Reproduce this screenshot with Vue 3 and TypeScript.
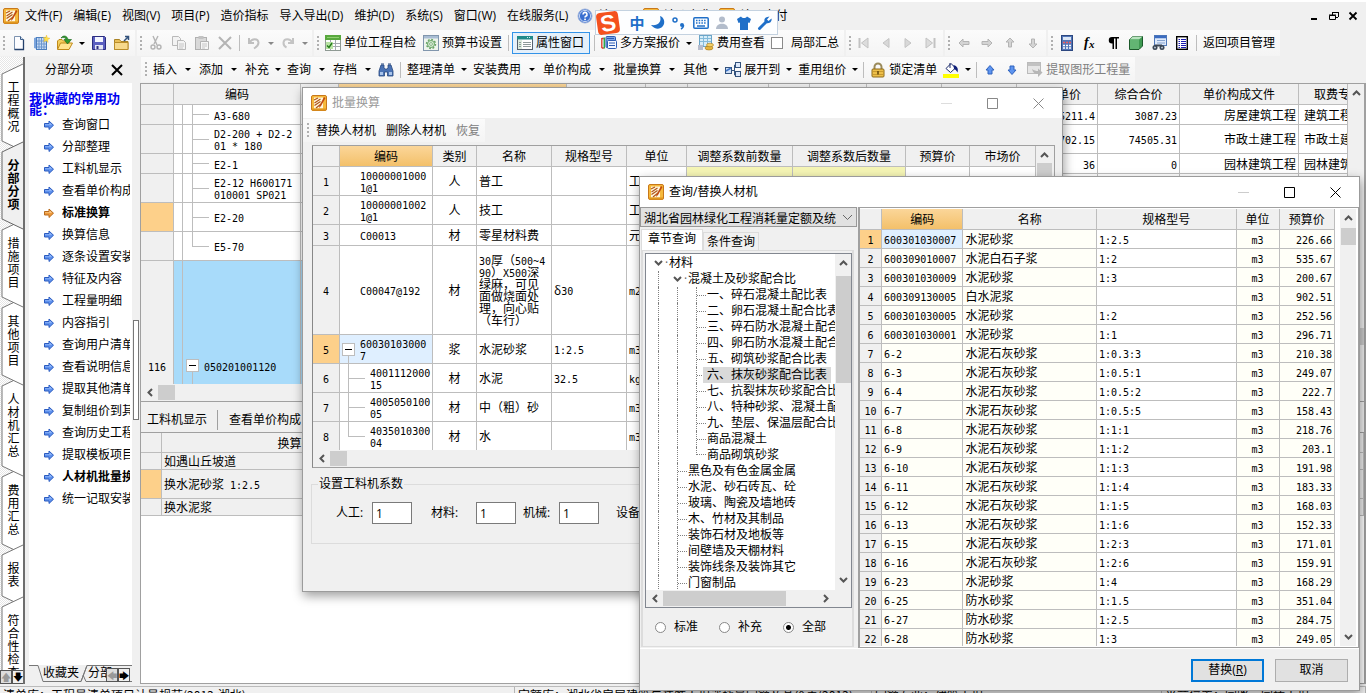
<script setup lang="ts">
import { h, ref } from 'vue'

interface ToolItem {
  k: 'grip' | 'sep' | 'icon' | 'text' | 'arrow' | 'check'
  icon?: string
  label?: string
  off?: boolean
  on?: boolean
  wide?: boolean
  slim?: boolean
}

const icons: Record<string, string> = {
  app: '<rect x="0.5" y="0.5" width="15" height="15" rx="1.5" fill="#f6b93c" stroke="#c8781a"/><rect x="3" y="2.500" width="9" height="11" fill="#fff6dc"/><path d="M3 5l4-2M3.500 8l6-4M3.500 10.500l6-4M5 13l5-4" stroke="#b0561a" stroke-width="1.2" fill="none"/><path d="M13 2L8.500 10.500 8 13l2-2 4.500-8z" fill="#c04a12"/><path d="M1 14.500h14" stroke="#e0961e" stroke-width="2"/>',
  help: '<circle cx="8" cy="8" r="7" fill="#3a6fd0" stroke="#9fb4dc"/><circle cx="8" cy="8" r="5.6" fill="none" stroke="#fff" stroke-width="0.7"/><path d="M6 6.4a2 2 0 1 1 2.8 1.8c-.6.3-.8.6-.8 1.3" fill="none" stroke="#fff" stroke-width="1.6"/><rect x="7.2" y="10.6" width="1.7" height="1.6" fill="#fff"/>',
  page: '<path d="M3.5 1.5h6l3 3v10h-9z" fill="#fdfdff" stroke="#7d93b0"/><path d="M12.500 4.500v10h-9" fill="none" stroke="#24406b" stroke-width="1.300"/><path d="M9.500 1.500v3h3" fill="#cfdcec" stroke="#3d5f8a"/>',
  book: '<path d="M0 3l3-1v12l-3-1z" fill="#7ba4dc"/><rect x="2.500" y="2.500" width="10" height="12" fill="#c9dcf3" stroke="#4d7fbf"/><path d="M5 3v11M7.500 3v11M10 3v11M3 6h9M3 9h9M3 12h9" stroke="#6c97cf"/><path d="M12.500 0l.8 2.700 2.700.6-2.300 1.400.4 2.800-2-1.800-2.400 1 1-2.500L9.200 2.300l2.500.2z" fill="#ffe04a" stroke="#e8b830" stroke-width=".4"/>',
  open: '<path d="M.5 14V6l1.500-1.500h3L6.500 6H12v2" fill="#f3cf5c" stroke="#c08a1a"/><path d="M.5 14.500L3.500 8h12L12 14.500z" fill="#ffe58f" stroke="#c08a1a"/><path d="M4 3c2.500-3.500 6.500-2 7 1.500h3.500L10.500 9 7 4.500h2C8.500 2.500 6.500 2 4 3z" fill="#2f9a2f" stroke="#146014" stroke-width=".6"/>',
  save: '<path d="M1.500 1.500h12l1 1v12h-13z" fill="#5b5fc0" stroke="#2b2d80"/><rect x="4" y="2" width="8" height="5" fill="#f4f6ff"/><rect x="4" y="10" width="8" height="4.500" fill="#e4e6f4"/><rect x="5.500" y="11" width="2" height="3" fill="#2b2d80"/>',
  folder: '<path d="M.5 4.500h5l1.500 2H14v8H.5z" fill="#e9bf58" stroke="#a98326"/><path d="M.5 14.500V7.500H14v7z" fill="#f6d98c" stroke="#b98d2a"/><path d="M10 6l4-4M11 1.500h3.500V5" stroke="#33527c" stroke-width="1.500" fill="none"/>',
  cut: '<path d="M5 1l4 9M10 1L6 9" stroke="#b4b4b4" stroke-width="1.400"/><circle cx="5" cy="12" r="2" fill="none" stroke="#b4b4b4" stroke-width="1.400"/><circle cx="11" cy="12" r="2" fill="none" stroke="#b4b4b4" stroke-width="1.400"/>',
  copy: '<path d="M1.500 1.500h6l2 2v7h-8z" fill="#f3f3f3" stroke="#b9b9b9"/><path d="M6.500 5.500h6l2 2v7h-8z" fill="#f3f3f3" stroke="#b9b9b9"/><path d="M8 9h5M8 11h5M8 13h4" stroke="#c6c6c6"/>',
  paste: '<rect x="1.500" y="2.500" width="11" height="12" fill="#d9d9d9" stroke="#b0b0b0"/><rect x="4.500" y="1" width="5" height="3" fill="#c2c2c2"/><path d="M6.500 6.500h8v8h-8z" fill="#f6f6f6" stroke="#b4b4b4"/><path d="M8 9h5M8 11h5M8 13h3" stroke="#c6c6c6"/>',
  del: '<path d="M2 2l12 12M14 2L2 14" stroke="#b4b4b4" stroke-width="2"/>',
  undo: '<path d="M3 3v5h5M3.500 7.500C6 3 12 3 12.500 7.500c.2 3-2 4.500-4.500 6" fill="none" stroke="#bfbfbf" stroke-width="2"/>',
  redo: '<path d="M13 3v5H8M12.500 7.500C10 3 4 3 3.500 7.500c-.2 3 1 4 3 5" fill="none" stroke="#c4c4c4" stroke-width="2"/>',
  check: '<rect x="0.500" y="0.500" width="15" height="15" fill="#fff" stroke="#8f9a94"/><rect x="0" y="0" width="16" height="5" fill="#58a83e"/><path d="M2 2.500h12" stroke="#8fd070"/><path d="M1 8.500h14M1 11.500h14M5.500 5v10M10.500 5v10" stroke="#a4a9ae"/><rect x="1" y="7" width="7" height="7" fill="#b9e3a4"/><path d="M2 10.500l2 2 3-4.500" stroke="#217a18" stroke-width="1.400" fill="none"/>',
  gear: '<rect x="0.500" y="0.500" width="15" height="15" fill="#eef4ec" stroke="#8196ad"/><rect x="1" y="1" width="14" height="2.500" fill="#a9bdd4"/><circle cx="8" cy="9" r="4.400" fill="none" stroke="#6aa568" stroke-width="1.600" stroke-dasharray="1.800 1.600"/><circle cx="8" cy="9" r="3.500" fill="#d7ecd3" stroke="#6aa568"/><circle cx="8" cy="9" r="1.400" fill="#fff" stroke="#6aa568" stroke-width=".8"/>',
  prop: '<rect x="0.500" y="1.500" width="15" height="13" fill="#fff" stroke="#55606e"/><rect x="0" y="1" width="16" height="3.500" fill="#1f8a8a"/><path d="M10 2.500h4" stroke="#cfeeee" stroke-dasharray="1 1"/><rect x="1" y="5" width="4" height="9" fill="#dcebdd"/><path d="M6 7.500h8M6 9.500h8M6 11.500h8M2 7.500h2M2 9.500h2M2 11.500h2" stroke="#8e9a9a"/>',
  multi: '<path d="M.8 3v10M.8 3.500h2M.8 13h2" stroke="#d93a2b" stroke-width="1.300"/><path d="M3.300 2.500v11" stroke="#2fa84a" stroke-width="1.500"/><rect x="5" y="1.500" width="9.500" height="11" rx="1" fill="#7aa4ea" stroke="#2c5cb3"/><rect x="6.500" y="5.500" width="9" height="8" rx="1" fill="#f3f7ff" stroke="#2c5cb3"/><path d="M6 3.500h7M8 8h6M8 10.500h6" stroke="#2c5cb3"/>',
  fee: '<rect x="1.500" y="0.500" width="12" height="11" fill="#d7edf8" stroke="#6aa5c8"/><path d="M2 3.500h11M2 6.500h11M5.500 1v10M9.500 1v10" stroke="#83bada"/><path d="M0 10h5v5H0z" fill="#b7bccc"/><ellipse cx="11" cy="13" rx="4" ry="2" fill="#e7b53c" stroke="#a37618" stroke-width=".6"/><ellipse cx="12" cy="10" rx="3.500" ry="1.800" fill="#f4cf66" stroke="#a37618" stroke-width=".6"/>',
  first: '<path d="M3.500 3v10" stroke="#c2c2c2" stroke-width="2"/><path d="M12 3v10L5.500 8z" fill="#dcdcdc" stroke="#c2c2c2"/>',
  prev: '<path d="M11 3.500v9L5 8z" fill="#d8d8d8" stroke="#c4c4c4"/>',
  next: '<path d="M5 3.500v9L11 8z" fill="#d8d8d8" stroke="#c4c4c4"/>',
  last: '<path d="M12.500 3v10" stroke="#c2c2c2" stroke-width="2"/><path d="M4 3v10l6.500-5z" fill="#dcdcdc" stroke="#c2c2c2"/>',
  gl: '<path d="M3 8l4-4v2.500h6v3H7V12z" fill="#d4d4d4" stroke="#b4b4b4"/>',
  gr: '<path d="M13 8L9 4v2.500H3v3h6V12z" fill="#d4d4d4" stroke="#b4b4b4"/>',
  gu: '<path d="M8 3l4 4H9.500v5h-3V7H4z" fill="#d4d4d4" stroke="#b4b4b4"/>',
  gd: '<path d="M8 13l4-4H9.500V4h-3v5H4z" fill="#d4d4d4" stroke="#b4b4b4"/>',
  calc: '<rect x="2.500" y="0.500" width="11" height="15" fill="#5276b8" stroke="#2c4780"/><rect x="4" y="2" width="8" height="3" fill="#dbe6f5"/><path d="M4 7.500h2M7 7.500h2M10 7.500h2" stroke="#f06060" stroke-width="1.600"/><path d="M4 10.500h2M7 10.500h2M10 10.500h2M4 13h2M7 13h2M10 13h2" stroke="#fff" stroke-width="1.600"/>',
  fx: '<text x="2" y="12" font-family="Liberation Serif,serif" font-style="italic" font-weight="bold" font-size="14">f</text><text x="7" y="13" font-family="Liberation Serif,serif" font-style="italic" font-weight="bold" font-size="11">x</text>',
  para: '<path d="M7 2a3.200 3.200 0 0 0 0 6.500h.5V14H9V3.500h1.500V14H12V3.500h2V2z" fill="#000"/>',
  cube: '<path d="M1.500 4.500L5 1.500h9.500V11L11 14.500H1.500z" fill="#3f9a52" stroke="#1c5a2b"/><path d="M1.500 4.500L5 1.500h9.500L11 4.500z" fill="#b9e4bf"/><path d="M11 4.500h-9v9.500h9z" fill="#62b573"/>',
  find: '<rect x="3.500" y="0.500" width="12" height="10" fill="#dfeafa" stroke="#4f78b8"/><path d="M4 2h11" stroke="#3b6cc0" stroke-width="2.500"/><path d="M6 5.500h8M6 8h8" stroke="#86a3cf"/><circle cx="4" cy="12.500" r="2.500" fill="#3b4654"/><circle cx="11" cy="12.500" r="2.500" fill="#3b4654"/><circle cx="4" cy="12.500" r="1" fill="#b9c6d6"/><circle cx="11" cy="12.500" r="1" fill="#b9c6d6"/><path d="M4 10.500h7" stroke="#3b4654" stroke-width="2"/>',
  list: '<rect x="2.700" y="1.700" width="10.600" height="12.600" fill="#fff" stroke="#000" stroke-width="1.400"/><path d="M4.500 4.500h1.500M7 4.500h5M4.500 6.500h1.500M7 6.500h5M4.500 8.500h1.500M7 8.500h5M4.500 10.500h1.500M7 10.500h5M4.500 12.500h1.500M7 12.500h5" stroke="#1a1ab0"/>',
  bino: '<path d="M3 3h3v3l1 1h2l1-1V3h3l2 6v5H9.500v-4h-3v4H1V9z" fill="#4a72b4" stroke="#27477e" stroke-width=".8"/><path d="M2 10h3v3H2zM11 10h3v3h-3z" fill="#a9c4ea"/><path d="M3 2h3M10 2h3" stroke="#27477e"/>',
  expand: '<rect x="0.500" y="5.500" width="6" height="6" fill="#cfe0f7" stroke="#33527c"/><path d="M7 8.500h3M9.500 3v10M9.500 3H11M9.500 13H11" stroke="#33527c"/><rect x="10.500" y="0.500" width="5" height="5" fill="#dce8fa" stroke="#33527c"/><rect x="10.500" y="9.500" width="5" height="5" fill="#dce8fa" stroke="#33527c"/><path d="M1 9l5-3" stroke="#3f74c4" stroke-width="1.500"/>',
  lock: '<path d="M4.500 8V5a3.500 3.500 0 0 1 7 0v3" fill="none" stroke="#9a8a5a" stroke-width="2"/><rect x="2" y="7" width="12" height="8" rx="1" fill="#edbf4a" stroke="#8d6a1a"/><path d="M3 9.500h10M3 12.500h10" stroke="#c99a2e"/><rect x="7.200" y="9" width="1.600" height="3.500" fill="#6b4d0c"/>',
  paint: '<path d="M3 6.500l5-5 4.500 4.500-5 4.500z" fill="#fff" stroke="#1a2a6a"/><path d="M7 1v5" stroke="#1a2a6a"/><path d="M10.500 3c4 1 5 4 4 7.500-1-2-2-3-3.500-3.500z" fill="#10207a"/><rect x="0" y="12" width="16" height="4" fill="#ff0"/>',
  up: '<path d="M8 3.500l4 4.500H10v4H6V8H4z" fill="#5d94f0" stroke="#2f62bd"/>',
  down: '<path d="M8 12.500l4-4.500H10V4H6v4H4z" fill="#5d94f0" stroke="#2f62bd"/>',
  extract: '<rect x="0.500" y="0.500" width="13" height="11" fill="#e6e6e6" stroke="#bbb"/><rect x="1" y="1" width="12" height="3" fill="#c2c2c2"/><path d="M5 7c1 4 3 5 6 5v3l4.500-4.500L11 6.500V9C9 9 7 8.500 5 7z" fill="#b6b6b6"/>',
  go: '<path d="M3.500 6.500h4.500V4l4.500 4.200L8 12.500V10H3.500z" fill="#5f92ee" stroke="#2a5bc0"/><path d="M4 7.200h4.500V5.500L11 7.700H4z" fill="#9fc0fa"/>',
  hot: '<path d="M3.500 6.500h4.500V4l4.500 4.200L8 12.500V10H3.500z" fill="#ef9a3c" stroke="#b86a1c"/><path d="M4 7.200h4.500V5.500L11 7.700H4z" fill="#fbd39a"/>',
}

const Ico = (p: { n: string }) =>
  h('svg', { class: 'ico', width: 16, height: 16, viewBox: '0 0 16 16', 'aria-hidden': 'true', innerHTML: icons[p.n] })
Ico.props = ['n']

/* Western characters in the data grids use a half-width face beside the CJK one. */
const Mix = (p: { t: string }) =>
  (p.t.match(/[\x20-\x7e\n]+|[^\x20-\x7e\n]+/g) || []).map((s) =>
    h('span', { class: /^[\x20-\x7e\n]/.test(s) ? 'lat' : 'cjk' }, s),
  )
Mix.props = ['t']

const menus = ['文件(F)', '编辑(E)', '视图(V)', '项目(P)', '造价指标', '导入导出(D)', '维护(D)', '系统(S)', '窗口(W)', '在线服务(L)']

const ic = (icon: string, o: Partial<ToolItem> = {}): ToolItem => ({ k: 'icon', icon, ...o })
const tx = (label: string, icon?: string, o: Partial<ToolItem> = {}): ToolItem => ({ k: 'text', label, icon, ...o })
const grip: ToolItem = { k: 'grip' }
const sep: ToolItem = { k: 'sep' }
const arrow: ToolItem = { k: 'arrow' }
const split: ToolItem = { k: 'arrow', wide: true }
const slim = { slim: true }

const bars1: ToolItem[][] = [
  [grip, ic('page'), ic('book'), ic('open'), arrow, ic('save'), ic('folder')],
  [grip, ic('cut'), ic('copy'), ic('paste'), ic('del'), sep, ic('undo'), { k: 'arrow', off: true }, ic('redo'), { k: 'arrow', off: true }],
  [grip, tx('单位工程自检', 'check'), tx('预算书设置', 'gear'), sep, tx('属性窗口', 'prop', { on: true }), sep, tx('多方案报价', 'multi'), arrow, tx('费用查看', 'fee'), { k: 'check', label: '局部汇总' }],
  [grip, ic('first', slim), ic('prev', slim), ic('next', slim), ic('last', slim)],
  [grip, ic('gl'), ic('gr'), ic('gu'), ic('gd')],
  [grip, ic('calc'), ic('fx'), ic('para'), ic('cube'), ic('find'), ic('list'), sep, tx('返回项目管理')],
]
const bar2: ToolItem[] = [
  grip, tx('插入'), split, tx('添加'), split, tx('补充'), arrow, tx('查询'), split, tx('存档'), split, ic('bino', slim), sep,
  tx('整理清单'), arrow, tx('安装费用'), split, tx('单价构成'), split, tx('批量换算'), split, tx('其他'), arrow,
  tx('展开到', 'expand'), arrow, tx('重用组价'), arrow, sep, tx('锁定清单', 'lock'), ic('paint', slim), arrow, sep,
  ic('up', slim), ic('down', slim), tx('提取图形工程量', 'extract', { off: true }),
]

const sideTabs = ['工程概况', '分部分项', '措施项目', '其他项目', '人材机汇总', '费用汇总', '报表', '符合性检查']
const tabH = (s: string) => s.length * 13 + 26
const tabPath = (s: string) => {
  const b = tabH(s)
  return `M23 1L2 11V${b}L23 ${b + 10}`
}

const favs = [
  '查询窗口', '分部整理', '工料机显示', '查看单价构成', '标准换算', '换算信息', '逐条设置安装费用', '特征及内容', '工程量明细',
  '内容指引', '查询用户清单', '查看说明信息', '提取其他清单', '复制组价到其他', '查询历史工程', '提取模板项目', '人材机批量换算', '统一记取安装费用',
]

const mainCols = [33, 127, 38, 0, 79, 42, 81, 41, 57, 75, 75, 81, 82, 119, 49]
const mainHeads = ['', '编码', '', '', '', '', '', '', '', '', '', '综合单价', '综合合价', '单价构成文件', '取费专业']
const mainRows = [
  { h: 20, code: 'A3-680', p: '5211.4', t: '3087.23', f: '房屋建筑工程', z: '建筑工程' },
  { h: 29, code: 'D2-200 + D2-2\n01 * 180', p: '702.15', t: '74505.31', f: '市政土建工程', z: '市政土建' },
  { h: 20, code: 'E2-1', p: '36', t: '0', f: '园林建筑工程', z: '园林建筑' },
  { h: 29, code: 'E2-12 H600171\n010001 SP021', p: '', t: '', f: '', z: '' },
  { h: 29, code: 'E2-20', p: '', t: '', f: '', z: '', sel: true },
  { h: 29, code: 'E5-70', p: '', t: '', f: '', z: '', last: true },
]

const dlgCols = [27, 93, 44, 75, 75, 60, 106, 113, 64, 66]
const dlgHeads = ['', '编码', '类别', '名称', '规格型号', '单位', '调整系数前数量', '调整系数后数量', '预算价', '市场价']
const dlgRows = [
  { h: 29, code: '10000001000\n1@1', kind: '人', name: '普工', spec: '', unit: '工日', lv: 0 },
  { h: 29, code: '10000001002\n1@1', kind: '人', name: '技工', spec: '', unit: '工日', lv: 0 },
  { h: 21, code: 'C00013', kind: '材', name: '零星材料费', spec: '', unit: '元', lv: 0 },
  { h: 89, code: 'C00047@192', kind: '材', name: '30厚（500~4\n90）X500深\n绿麻，可见\n面做烧面处\n理，向心贴\n（车行）', spec: 'δ30', unit: 'm2', lv: 0 },
  { h: 29, code: '60030103000\n7', kind: '浆', name: '水泥砂浆', spec: '1:2.5', unit: 'm3', lv: 1 },
  { h: 29, code: '4001112000\n15', kind: '材', name: '水泥', spec: '32.5', unit: 'kg', lv: 2 },
  { h: 29, code: '4005050100\n05', kind: '材', name: '中（粗）砂', spec: '', unit: 'm3', lv: 2 },
  { h: 29, code: '4035010300\n04', kind: '材', name: '水', spec: '', unit: 'm3', lv: 3 },
]

const queryCols = [22, 81, 133, 139, 43, 55]
const queryHeads = ['', '编码', '名称', '规格型号', '单位', '预算价']
const queryRows: string[][] = [
  ['600301030007', '水泥砂浆', '1:2.5', '226.66'],
  ['600309010007', '水泥白石子浆', '1:2', '535.67'],
  ['600301030009', '水泥砂浆', '1:3', '200.67'],
  ['600309130005', '白水泥浆', '', '902.51'],
  ['600301030005', '水泥砂浆', '1:2', '252.56'],
  ['600301030001', '水泥砂浆', '1:1', '296.71'],
  ['6-2', '水泥石灰砂浆', '1:0.3:3', '210.38'],
  ['6-3', '水泥石灰砂浆', '1:0.5:1', '249.07'],
  ['6-4', '水泥石灰砂浆', '1:0.5:2', '222.7'],
  ['6-7', '水泥石灰砂浆', '1:0.5:5', '158.43'],
  ['6-8', '水泥石灰砂浆', '1:1:1', '218.76'],
  ['6-9', '水泥石灰砂浆', '1:1:2', '203.1'],
  ['6-10', '水泥石灰砂浆', '1:1:3', '191.98'],
  ['6-11', '水泥石灰砂浆', '1:1:4', '183.33'],
  ['6-12', '水泥石灰砂浆', '1:1:5', '168.03'],
  ['6-13', '水泥石灰砂浆', '1:1:6', '152.33'],
  ['6-15', '水泥石灰砂浆', '1:2:3', '171.01'],
  ['6-16', '水泥石灰砂浆', '1:2:6', '159.91'],
  ['6-23', '水泥砂浆', '1:4', '168.29'],
  ['6-25', '防水砂浆', '1:1.5', '351.04'],
  ['6-27', '防水砂浆', '1:2.5', '284.75'],
  ['6-28', '防水砂浆', '1:3', '249.05'],
]

const tree = [
  { lv: 0, t: '材料', open: true },
  { lv: 1, t: '混凝土及砂浆配合比', open: true },
  { lv: 2, t: '一、碎石混凝土配比表' },
  { lv: 2, t: '二、卵石混凝土配合比表' },
  { lv: 2, t: '三、碎石防水混凝土配合比表' },
  { lv: 2, t: '四、卵石防水混凝土配合比表' },
  { lv: 2, t: '五、砌筑砂浆配合比表' },
  { lv: 2, t: '六、抹灰砂浆配合比表', sel: true },
  { lv: 2, t: '七、抗裂抹灰砂浆配合比表' },
  { lv: 2, t: '八、特种砂浆、混凝土配合比表' },
  { lv: 2, t: '九、垫层、保温层配合比表' },
  { lv: 2, t: '商品混凝土' },
  { lv: 2, t: '商品砌筑砂浆', last: true },
  { lv: 1, t: '黑色及有色金属金属' },
  { lv: 1, t: '水泥、砂石砖瓦、砼' },
  { lv: 1, t: '玻璃、陶瓷及墙地砖' },
  { lv: 1, t: '木、竹材及其制品' },
  { lv: 1, t: '装饰石材及地板等' },
  { lv: 1, t: '间壁墙及天棚材料' },
  { lv: 1, t: '装饰线条及装饰其它' },
  { lv: 1, t: '门窗制品' },
]

const scope = ref('全部')
const library = ref('湖北省园林绿化工程消耗量定额及统一基价表')
const partial = ref(false)
const factors = ref([
  { label: '人工:', id: 'f-labor', v: '1' },
  { label: '材料:', id: 'f-material', v: '1' },
  { label: '机械:', id: 'f-machine', v: '1' },
  { label: '设备:', id: 'f-equip', v: '1' },
])
const px = (n: number) => (n ? { width: n + 'px' } : {})
</script>

<template>
  <div class="app">
    <header class="menubar">
      <Ico n="app" />
      <nav class="menus">
        <button v-for="m in menus" :key="m">{{ m }}</button>
      </nav>
      <Ico n="help" />
      <button class="extra about">关于</button>
      <Ico n="app" />
      <button class="extra">计价宝典</button>
      <Ico n="app" />
      <button class="extra">结果支付</button>
      <div class="winctl">
        <button aria-label="最小化"><svg width="10" height="10"><path d="M1 8h6" stroke="#000" stroke-width="2" /></svg></button>
        <button aria-label="还原"><svg width="10" height="10"><path d="M3 1.500h6M3.500 1v3M9.500 1v5M7 6.500h2M.5 4.500h6v4h-6zM0 4h7" fill="none" stroke="#000" /></svg></button>
        <button aria-label="关闭"><svg width="10" height="10"><path d="M1.500 1.500l7 7M8.500 1.500l-7 7" stroke="#000" stroke-width="1.800" /></svg></button>
      </div>
      <div class="ime">
        <svg class="sogou" width="28" height="28" viewBox="0 0 28 28">
          <rect x="3" y="3" width="22" height="22" rx="4" fill="#f4511e" transform="rotate(-8 14 14)" />
          <text x="14" y="22" text-anchor="middle" font-family="Liberation Sans, sans-serif" font-weight="bold" font-size="23" fill="#fff" transform="rotate(-12 14 14)">S</text>
        </svg>
        <b>中</b>
        <svg width="16" height="16"><path d="M10 1c2 6-2 10-9 9 4 5 11 5 13-1 1-4-1-7-4-8z" fill="#1f6fc8" /></svg>
        <svg width="16" height="16"><circle cx="4" cy="5" r="2" fill="none" stroke="#1f6fc8" stroke-width="1.500" /><circle cx="11" cy="10" r="2" fill="#1f6fc8" /><path d="M12.500 10c0 2-.5 3-2.500 4" stroke="#1f6fc8" stroke-width="1.500" fill="none" /></svg>
        <svg width="16" height="16"><rect x="0.800" y="2.800" width="14.400" height="10.400" rx="1" fill="none" stroke="#1f6fc8" stroke-width="1.500" /><path d="M3 5.500h10M3 8h10" stroke="#1f6fc8" stroke-width="1.500" stroke-dasharray="1.500 1.200" /><path d="M4 11h8" stroke="#1f6fc8" stroke-width="1.500" /></svg>
        <svg width="16" height="16"><circle cx="8" cy="4.500" r="3" fill="#b2bccb" /><path d="M2 14c0-7 12-7 12 0z" fill="#b2bccb" /></svg>
        <svg width="16" height="16"><path d="M1 4l4-2.500c1.500 2 4.500 2 6 0L15 4l-1.500 4L12 7.500V15H4V7.500L2.500 8z" fill="#1f6fc8" /></svg>
        <svg width="16" height="16"><path d="M2.500 13.500L9 7" stroke="#1f6fc8" stroke-width="3" stroke-linecap="round" /><path d="M12.500 1.500L10 4.500l1.500 1.500 3-2.500c.8 3-2 5.500-5 4.500S6 2 12.500 1.500z" fill="#1f6fc8" /></svg>
      </div>
    </header>

    <div class="toolrow">
      <div v-for="(bar, b) in bars1" :key="b" class="bar">
        <template v-for="(it, i) in bar" :key="i">
          <span v-if="it.k === 'grip'" class="grip"></span>
          <span v-else-if="it.k === 'sep'" class="sep"></span>
          <button v-else-if="it.k === 'arrow'" class="arrow" :class="{ wide: it.wide, off: it.off }" aria-label="更多"></button>
          <label v-else-if="it.k === 'check'" class="partial"><input v-model="partial" type="checkbox" />{{ it.label }}</label>
          <button v-else-if="it.k === 'icon'" class="ib" :class="{ slim: it.slim }"><Ico :n="it.icon!" /></button>
          <button v-else class="tb" :class="{ on: it.on, off: it.off }"><Ico v-if="it.icon" :n="it.icon" />{{ it.label }}</button>
        </template>
      </div>
    </div>

    <div class="work">
      <nav class="strip">
        <button v-for="(t, i) in sideTabs" :key="t" class="stab" :class="{ on: i === 1 }">
          <svg width="25" :height="tabH(t) + 12">
            <path :d="tabPath(t)" :fill="i === 1 ? '#f0f0f0' : '#fff'" :stroke="i === 1 ? '#666' : '#777'" />
          </svg>
          <span>{{ t }}</span>
        </button>
        <div class="spin"><button aria-label="上" class="dim">🡅</button><button aria-label="下">🡇</button></div>
      </nav>

      <aside class="fav">
        <div class="favhead">
          <span>分部分项</span>
          <button aria-label="关闭面板"><svg width="12" height="12"><path d="M1 1l10 10M11 1L1 11" stroke="#000" stroke-width="2" /></svg></button>
        </div>
        <div class="favbody">
          <h2>我收藏的常用功能：</h2>
          <ul>
            <li v-for="(f, i) in favs" :key="f" :class="{ b: i === 4 || i === 16 }">
              <a href="#"><Ico :n="i === 4 ? 'hot' : 'go'" />{{ f }}</a>
            </li>
          </ul>
        </div>
        <div class="favtabs">
          <svg width="103" height="18"><path d="M0 .5h9l5 16h38l6-16h45M52 16.500l6-16M54 10l3 6.500h46" fill="none" stroke="#777" /></svg>
          <button class="ft">收藏夹</button><button class="ft">分部</button>
          <div class="spin"><button aria-label="左" class="dim">🡄</button><button aria-label="右">🡆</button></div>
        </div>
      </aside>
      <div class="splitter"><span></span></div>

      <main class="main">
        <div class="bar row2">
          <template v-for="(it, i) in bar2" :key="i">
            <span v-if="it.k === 'grip'" class="grip"></span>
            <span v-else-if="it.k === 'sep'" class="sep"></span>
            <button v-else-if="it.k === 'arrow'" class="arrow" :class="{ wide: it.wide }" aria-label="更多"></button>
            <button v-else-if="it.k === 'icon'" class="ib" :class="{ slim: it.slim }"><Ico :n="it.icon!" /></button>
            <button v-else class="tb" :class="{ off: it.off }"><Ico v-if="it.icon" :n="it.icon" />{{ it.label }}</button>
          </template>
        </div>
        <section class="panel">
          <div class="upper">
            <div class="clip">
              <table class="grid full">
                <colgroup><col v-for="(w, i) in mainCols" :key="i" :style="px(w)" /></colgroup>
                <thead><tr><th v-for="(t, i) in mainHeads" :key="i" :class="{ hot: i === 3, cutoff: i === 14 }">{{ t }}</th></tr></thead>
                <tbody>
                  <tr v-for="r in mainRows" :key="r.code" :style="{ height: r.h + 'px' }">
                    <td class="num" :class="{ sel: r.sel }"></td>
                    <td class="tc"><div class="tree1"><i class="pad8"></i><i class="v10"></i><i class="br" :class="{ last: r.last }"></i><span><Mix :t="r.code" /></span></div></td>
                    <td v-for="n in 9" :key="n"></td>
                    <td class="r"><Mix :t="r.p" /></td>
                    <td class="r"><Mix :t="r.t" /></td>
                    <td class="r">{{ r.f }}</td>
                    <td class="z">{{ r.z }}</td>
                  </tr>
                  <tr class="blue">
                    <td class="num"><Mix t="116" /></td>
                    <td class="tc"><div class="tree1"><i class="pad8"></i><i class="v4"></i><i class="box mid"></i><span><Mix t="050201001120" /></span></div></td>
                    <td v-for="n in 13" :key="n"></td>
                  </tr>
                </tbody>
              </table>
            </div>
            <div class="vs"><svg class="chev" width="9" height="6"><path d="M1 5l3.500-3.500L8 5" /></svg><span class="thumb"></span></div>
          </div>
          <div class="hs"><svg class="chev" width="6" height="9"><path d="M5 1L1.500 4.500 5 8" /></svg><span class="thumb"></span></div>
          <div class="subtabs"><button>工料机显示</button><button>查看单价构成</button></div>
          <div class="lower">
            <table class="grid full">
              <colgroup><col class="c20" /><col class="c280" /><col /></colgroup>
              <thead><tr><th></th><th>换算列表</th><th></th></tr></thead>
              <tbody>
                <tr class="h17"><td></td><td>如遇山丘坡道</td><td></td></tr>
                <tr class="h29"><td class="sel"></td><td><Mix t="换水泥砂浆 1:2.5" /></td><td></td></tr>
                <tr class="h17"><td></td><td>换水泥浆</td><td></td></tr>
              </tbody>
            </table>
          </div>
        </section>
      </main>
    </div>

    <footer class="status">
      <span class="s1">清单库：工程量清单项目计量规范(2013-湖北)</span>
      <span class="s2">定额库：湖北省房屋建筑与装饰工程消耗量定额及基价表(2013)</span>
      <span class="s3">定额专业：建筑工程</span>
      <span class="s4">当前位置：园路、园桥工程</span>
    </footer>

    <section class="dlg one" role="dialog" aria-label="批量换算">
      <div class="title dimt">
        <Ico n="app" /><span>批量换算</span>
        <div class="dctl">
          <button aria-label="最小化"><svg width="11" height="11"><path d="M0 5.500h11" stroke="#ddd" /></svg></button>
          <button aria-label="最大化"><svg width="11" height="11"><path d="M.5.500h10v10H.5z" fill="none" stroke="#888" /></svg></button>
          <button aria-label="关闭"><svg width="11" height="11"><path d="M.5.500l10 10M10.500.500l-10 10" stroke="#888" /></svg></button>
        </div>
      </div>
      <div class="bar dbar"><span class="grip"></span><button class="tb">替换人材机</button><button class="tb">删除人材机</button><button class="tb off">恢复</button></div>
      <div class="gridbox">
        <div class="rowx">
          <div class="clip1">
            <table class="grid full">
              <colgroup><col v-for="(w, i) in dlgCols" :key="i" :style="px(w)" /></colgroup>
              <thead><tr><th v-for="(t, i) in dlgHeads" :key="i" :class="{ hot: i === 1 }">{{ t }}</th></tr></thead>
              <tbody>
                <tr v-for="(r, i) in dlgRows" :key="i" :style="{ height: r.h + 'px' }">
                  <td class="num" :class="{ sel: i === 4 }"><Mix :t="String(i + 1)" /></td>
                  <td class="tc" :class="{ cur: i === 4 }">
                    <div class="tree1">
                      <i v-if="r.lv === 0" class="pad20"></i>
                      <template v-else-if="r.lv === 1"><i class="pad2"></i><i class="box"></i></template>
                      <template v-else><i class="pad8"></i><i class="br" :class="{ last: r.lv === 3 }"></i></template>
                      <span><Mix :t="r.code" /></span>
                    </div>
                  </td>
                  <td class="c">{{ r.kind }}</td>
                  <td class="pre"><Mix :t="r.name" /></td>
                  <td><Mix :t="r.spec" /></td>
                  <td><Mix :t="r.unit" /></td>
                  <td class="yel"></td><td class="yel"></td><td></td><td></td>
                </tr>
              </tbody>
            </table>
          </div>
          <div class="vs"><svg class="chev" width="9" height="6"><path d="M1 5l3.500-3.500L8 5" /></svg><span class="thumb"></span></div>
        </div>
        <div class="hs"><svg class="chev" width="6" height="9"><path d="M5 1L1.500 4.500 5 8" /></svg><span class="thumb"></span></div>
      </div>
      <fieldset class="factors">
        <legend>设置工料机系数</legend>
        <div v-for="f in factors" :key="f.id" class="factor"><label :for="f.id">{{ f.label }}</label><input :id="f.id" v-model="f.v" type="text" /></div>
      </fieldset>
    </section>

    <section class="dlg two" role="dialog" aria-label="查询/替换人材机">
      <div class="title">
        <Ico n="app" /><span>查询/替换人材机</span>
        <div class="dctl">
          <button aria-label="最小化"><svg width="11" height="11"><path d="M0 5.500h11" stroke="#ccc" /></svg></button>
          <button aria-label="最大化"><svg width="11" height="11"><path d="M.5.500h10v10H.5z" fill="none" stroke="#000" /></svg></button>
          <button aria-label="关闭"><svg width="11" height="11"><path d="M.5.500l10 10M10.500.500l-10 10" stroke="#000" /></svg></button>
        </div>
      </div>
      <div class="split">
        <div class="leftcol">
          <div class="selwrap">
            <select v-model="library" aria-label="定额库"><option>湖北省园林绿化工程消耗量定额及统一基价表</option></select>
            <svg class="chev" width="11" height="7"><path d="M1 1l4.500 4.500L10 1" /></svg>
          </div>
          <div class="ptabs"><button class="on">章节查询</button><button>条件查询</button></div>
          <div class="pane">
            <div class="treebox">
              <div class="treerow">
                <ul>
                  <li v-for="n in tree" :key="n.t">
                    <i v-for="g in n.lv" :key="g" class="guide"></i>
                    <span v-if="n.open" class="tog"><svg class="chev" width="9" height="6"><path d="M1 1l3.500 3.500L8 1" /></svg>·</span>
                    <i v-else class="dots" :class="{ last: n.last }"></i>
                    <span class="tl" :class="{ sel: n.sel }">{{ n.t }}</span>
                  </li>
                </ul>
                <div class="vs"><svg class="chev" width="9" height="6"><path d="M1 5l3.500-3.500L8 5" /></svg><span class="thumb"></span><svg class="chev end" width="9" height="6"><path d="M1 1l3.500 3.500L8 1" /></svg></div>
              </div>
              <div class="hs"><svg class="chev" width="6" height="9"><path d="M5 1L1.500 4.500 5 8" /></svg><span class="thumb"></span><svg class="chev end" width="6" height="9"><path d="M1 1l3.500 3.500L1 8" /></svg></div>
            </div>
            <div class="radios">
              <label v-for="o in ['标准', '补充', '全部']" :key="o"><input v-model="scope" type="radio" name="scope" :value="o" />{{ o }}</label>
            </div>
          </div>
        </div>
        <div class="rightcol">
          <div class="clip2">
            <table class="grid full">
              <colgroup><col v-for="(w, i) in queryCols" :key="i" :style="px(w)" /></colgroup>
              <thead><tr><th v-for="(t, i) in queryHeads" :key="i" :class="{ hot: i === 1 }">{{ t }}</th></tr></thead>
              <tbody>
                <tr v-for="(r, i) in queryRows" :key="i" class="h19">
                  <td class="num" :class="{ sel: i === 0 }"><Mix :t="String(i + 1)" /></td>
                  <td :class="i === 0 ? 'cur' : 'cream'"><Mix :t="r[0]" /></td>
                  <td class="cream">{{ r[1] }}</td>
                  <td><Mix :t="r[2]" /></td>
                  <td class="c cream"><Mix t="m3" /></td>
                  <td class="r cream"><Mix :t="r[3]" /></td>
                </tr>
              </tbody>
            </table>
          </div>
          <div class="vs"><svg class="chev" width="9" height="6"><path d="M1 5l3.500-3.500L8 5" /></svg><span class="thumb"></span><svg class="chev end" width="9" height="6"><path d="M1 1l3.500 3.500L8 1" /></svg></div>
        </div>
      </div>
      <div class="actions"><button class="pri">替换(<u>R</u>)</button><button>取消</button></div>
    </section>
  </div>
</template>

<style>
html, body { height: 100%; overflow: hidden; }
.ico { display: block; flex: none; }
.lat { font-family: "DejaVu Sans Mono", "Liberation Mono", monospace; font-size: 10px; line-height: 0; }
</style>

<style scoped>
* { box-sizing: border-box; }
.app {
  position: relative; height: 100vh; display: flex; flex-direction: column; overflow: hidden;
  background: #f0f0f0; color: #000; border-top: 2px solid #fff;
  font: 12px/16px "Open Sans", "Noto Sans CJK SC", sans-serif;
}
button { font: inherit; color: inherit; background: none; border: 0; padding: 0; margin: 0; white-space: nowrap; }
ul { list-style: none; margin: 0; padding: 0; }

.menubar { position: relative; z-index: 1; flex: none; height: 27px; display: flex; align-items: center; padding: 0 8px 0 3px; }
.menus { display: flex; gap: 11px; margin: 0 9px 0 6px; }
.extra { margin: 0 8px 0 4px; }
.about { margin-right: 22px; }
.winctl { margin-left: auto; display: flex; gap: 9px; }
.winctl svg { display: block; }
.ime {
  position: absolute; left: 595px; top: 8px; height: 25px; width: 183px; padding: 0 4px 0 2px; display: flex; align-items: center;
  justify-content: space-between; background: #fdfeff; border: 1px solid #c4d2e0;
}
.ime b { color: #1f6fc8; font-size: 15px; }
.sogou { flex: none; margin: 0 2px 0 -4px; }

.toolrow { flex: none; height: 28px; display: flex; align-items: center; gap: 2px; }
.bar { display: flex; align-items: center; height: 26px; padding-right: 2px; flex: none; background: linear-gradient(#fbfbfb, #f4f4f4); }
.grip { width: 7px; height: 15px; flex: none; background: repeating-linear-gradient(#b0b0b0 0 2px, transparent 2px 4px) 3px 0 / 2px 100% no-repeat; }
.sep { width: 6px; height: 16px; flex: none; background: linear-gradient(#bdbdbd, #bdbdbd) 3px 0 / 1px 100% no-repeat; }
.ib { width: 23px; height: 22px; display: flex; align-items: center; justify-content: center; }
.ib.slim { width: 22px; }
.tb { display: flex; align-items: center; gap: 3px; height: 22px; padding: 0 3px 0 4px; }
.tb.on { border: 1px solid #3393e8; background: #e5f0fa; margin: 0 1px; padding: 0 5px 0 4px; }
.tb.off { color: #808080; }
.arrow { width: 11px; height: 22px; display: flex; align-items: center; justify-content: center; }
.arrow::before { content: ""; border: 3px solid transparent; border-top-color: #000; border-bottom: 0; }
.arrow.wide { width: 15px; }
.arrow.off::before { border-top-color: #888; }
.partial { display: flex; align-items: center; gap: 8px; padding: 0 3px; }
.partial input { appearance: none; width: 12px; height: 12px; margin: 0; border: 1px solid #8a8a8a; background: #fff; }

.work { flex: 1; min-height: 0; display: flex; }
.strip {
  position: relative; flex: none; width: 25px; padding-top: 10px; overflow: hidden; border-right: 2px solid #6e6e6e; margin-bottom: 2px;
  background: conic-gradient(#e6e6e6 25%, #fff 0 50%, #e6e6e6 0 75%, #fff 0) 0 0 / 2px 2px;
}
.stab { display: block; position: relative; width: 25px; padding: 13px 5px 13px 7px; z-index: 1; }
.stab:nth-child(1) { z-index: 5; }
.stab:nth-child(3) { z-index: 4; }
.stab:nth-child(4) { z-index: 3; }
.stab:nth-child(5) { z-index: 2; }
.stab.on { z-index: 6; font-weight: bold; }
.stab svg { position: absolute; left: 0; top: -4px; }
.stab span { position: relative; display: block; width: 13px; white-space: normal; word-break: break-all; line-height: 13px; font-family: "Noto Sans CJK SC", sans-serif; }
.spin { position: absolute; z-index: 9; display: flex; }
.spin button { width: 12px; height: 14px; font-size: 10px; line-height: 10px; background: #f0f0f0; border: 1px solid #555; overflow: hidden; }
.spin .dim { color: #999; background: #ddd; }
.strip .spin { left: 0; bottom: 0; }

.fav { flex: none; width: 107px; padding-left: 4px; display: flex; flex-direction: column; }
.favhead { height: 26px; display: flex; align-items: center; justify-content: space-between; padding: 0 9px 0 16px; }
.favhead svg { display: block; }
.favbody { flex: 1; min-height: 0; background: #fff; padding: 10px 2px 0 0; overflow: hidden; }
.favbody h2 { margin: 0; height: 21px; font-size: 13px; line-height: 11px; color: #0000f0; }
.favbody ul { overflow: hidden; }
.favbody li { height: 22px; overflow: hidden; }
.favbody a { display: flex; align-items: center; height: 22px; gap: 5px; padding-left: 12px; color: #000; text-decoration: none; white-space: nowrap; }
.favbody .b { font-weight: bold; }
.favtabs { position: relative; height: 21px; display: flex; align-items: flex-start; gap: 9px; padding-left: 14px; overflow: hidden; }
.favtabs > svg { position: absolute; left: 0; top: 0; }
.ft { position: relative; }
.favtabs .spin { right: 2px; top: 3px; }
.splitter { flex: none; width: 9px; padding: 263px 2px 0 1px; }
.splitter span { display: block; height: 100px; border: 1px solid #777; background: #fff; }

.main { flex: 1; min-width: 0; display: flex; flex-direction: column; }
.row2 { align-self: flex-start; height: 25px; margin-bottom: 1px; padding-left: 1px; }
.panel { flex: 1; min-height: 0; margin: 0 0 2px -1px; border: 1px solid #a0a0a0; border-width: 1px 2px 1px 1px; background: #f0f0f0; display: flex; flex-direction: column; }
.upper { flex: none; height: 300px; display: flex; }
.clip { flex: 1; min-width: 0; overflow: hidden; }

.grid { border-spacing: 0; table-layout: fixed; line-height: 12px; font-family: "Noto Sans CJK SC", sans-serif; }
.full { width: 100%; }
.grid th { height: 21px; padding: 0; font-weight: normal; background: #f0f0f0; border: solid #bdbdbd; border-width: 0 1px 1px 0; white-space: nowrap; overflow: hidden; }
.grid th.hot { background: linear-gradient(#fbd699, #f3c06a); }
.grid th.cutoff { text-align: left; padding-left: 15px; }
.grid td { padding: 0 2px; background: #fff; border: solid #bdbdbd; border-width: 0 1px 1px 0; white-space: nowrap; overflow: hidden; }
.grid td.num { background: #f0f0f0; text-align: center; padding: 0; }
.grid td.sel { background: #fdd08a; }
.grid td.c { text-align: center; }
.grid td.r { text-align: right; }
.grid td.z { padding-left: 5px; }
.grid td.pre, .tree1 > span { white-space: pre; }
.grid td.yel { background: #f5f5b5; }
.grid td.cream { background: #fffff8; }
.grid td.cur { background: #dfefff; }
.grid td.tc { padding: 0; height: inherit; }
.h17 { height: 17px; } .h19 { height: 19px; } .h29 { height: 29px; }
.c20 { width: 21px; } .c280 { width: 280px; }
.tree1 { display: flex; align-items: center; height: 100%; }
.tree1 i { flex: none; align-self: stretch; }
.pad2 { width: 2px; } .pad8 { width: 8px; } .pad20 { width: 20px; }
.v10 { width: 10px; border-left: 1px solid #bdbdbd; }
.v4 { width: 4px; border-left: 1px solid #bdbdbd; }
.br { width: 22px; background: linear-gradient(#bdbdbd, #bdbdbd) 0 0 / 1px 100% no-repeat, linear-gradient(#bdbdbd, #bdbdbd) 0 50% / 17px 1px no-repeat; }
.br.last { background-size: 1px 50%, 17px 1px; }
.box {
  width: 18px;
  background: linear-gradient(#000, #000) 3px 50% / 7px 1px no-repeat, linear-gradient(#fff, #fff) 1px 50% / 11px 11px no-repeat,
    linear-gradient(#bdbdbd, #bdbdbd) 0 50% / 13px 13px no-repeat, linear-gradient(#bdbdbd, #bdbdbd) 6px 100% / 1px 50% no-repeat;
}
.blue { height: 210px; }
.blue td { background: #a8dbfa; }

.vs { position: relative; flex: none; width: 16px; background: #f0f0f0; display: flex; flex-direction: column; align-items: center; padding: 6px 0; }
.hs { flex: none; height: 17px; background: #f0f0f0; display: flex; align-items: center; padding: 0 6px; }
.chev path { fill: none; stroke: #555; stroke-width: 2; }
.chev { flex: none; }
.end { margin-top: auto; }
.thumb { background: #cdcdcd; }
.vs .thumb { width: 15px; }
.upper .thumb { margin-top: 232px; height: 17px; }
.hs .thumb { width: 17px; height: 15px; margin-left: 5px; }
.subtabs { flex: none; height: 31px; border-top: 1px solid #a0a0a0; display: flex; align-items: center; padding-top: 6px; }
.subtabs button { padding: 0 10px 0 6px; height: 20px; border-right: 1px solid #a0a0a0; }
.subtabs button + button { padding-left: 11px; border: 0; }
.lower { flex: 1; min-height: 0; overflow: hidden; border-top: 1px solid #a0a0a0; background: #fff; }
.lower .grid th { height: 20px; }
.lower .grid td { background: #f0f0f0; }
.lower .grid td.sel { background: #fdd08a; }

.status { flex: none; height: 7px; overflow: hidden; display: grid; grid-template-columns: 515fr 357fr 290fr 204fr; border-top: 1px solid #bbb; line-height: 12px; font-family: "Noto Sans CJK SC", sans-serif; }
.status span { padding: 2px 0 0 3px; border-right: 1px solid #b5b5b5; white-space: nowrap; overflow: hidden; height: 20px; }

.dlg { position: absolute; background: #f0f0f0; border: 1px solid #9b9b9b; box-shadow: 1px 4px 10px rgba(0, 0, 0, .38); display: flex; flex-direction: column; }
.title { flex: none; height: 30px; background: #fff; display: flex; align-items: center; gap: 5px; padding: 0 18px 0 8px; }
.dimt { color: #999; }
.dctl { margin-left: auto; display: flex; gap: 35px; }
.dctl svg { display: block; }
.one { left: 302px; top: 85px; width: 761px; height: 505px; }
.dbar { align-self: flex-start; margin: 1px 0 3px; height: 23px; padding: 0 2px 0 1px; gap: 3px; }
.dbar .tb:nth-child(2) { padding-left: 2px; }
.gridbox { flex: none; margin: 0 7px 0 9px; border: 1px solid #a0a0a0; border-left-color: #888; padding-right: 2px; }
.rowx { display: flex; height: 304px; }
.clip1 { flex: 1; min-width: 0; overflow: hidden; }
.rowx .thumb { margin-top: 5px; height: 60px; }
.factors { display: flex; align-items: center; margin: 8px 9px 0 8px; height: 68px; padding: 10px 0 4px 24px; border: 1px solid #dcdcdc; gap: 17px; }
.factors legend { margin-left: -18px; padding: 0 1px; line-height: 16px; }
.factor { display: flex; align-items: center; gap: 6px; }
.factor label { min-width: 30px; }
.factor:nth-of-type(2) { gap: 15px; margin-left: 2px; }
.factor:nth-of-type(3) { margin-left: -10px; }
.factor input { width: 40px; height: 22px; border: 1px solid #7a7a7a; padding: 0 3px; font: 12px "Open Sans", sans-serif; background: #fff; }

.two { left: 639px; top: 174px; width: 721px; height: 515px; }
.split { flex: 1; min-height: 0; display: flex; }
.leftcol { width: 218px; flex: none; display: flex; flex-direction: column; padding: 0 0 1px 0; }
.selwrap { position: relative; width: 217px; }
.selwrap select { appearance: none; display: block; width: 100%; height: 20px; border: 1px solid #999; border-radius: 0; background: #e1e1e1; padding: 0 20px 0 3px; font: 12px "Noto Sans CJK SC", sans-serif; color: #000; }
.selwrap .chev { position: absolute; right: 4px; top: 7px; }
.selwrap .chev path { stroke: #666; stroke-width: 1; }
.ptabs { display: flex; align-items: flex-end; height: 23px; padding-left: 1px; }
.ptabs button { height: 18px; padding: 0 3px; border: 1px solid #dcdcdc; border-bottom: 0; }
.ptabs .on { height: 21px; padding: 0 6px 2px; background: #fff; }
.pane { flex: 1; min-height: 0; width: 213px; margin-left: 1px; border: 1px solid #dcdcdc; border-width: 1px 2px; background: #f0f0f0; display: flex; flex-direction: column; }
.treebox { flex: 1; min-height: 0; margin: 2px 0 0 2px; border: 1px solid #828790; background: #f0f0f0; display: flex; flex-direction: column; }
.treerow { flex: 1; min-height: 0; display: flex; }
.treerow ul { flex: 1; min-width: 0; overflow: hidden; background: #fff; padding: 1px 0 0 12px; }
.treerow li { display: flex; height: 16px; white-space: nowrap; }
.treerow li i { flex: none; }
.guide { width: 19px; border-left: 1px dotted #808080; }
.dots { width: 11px; border-left: 1px dotted #808080; background: repeating-linear-gradient(90deg, #808080 0 1px, transparent 1px 2px) 0 8px / 9px 1px no-repeat; }
.dots.last { height: 8px; background-position: 0 7px; }
.tog { width: 11px; display: flex; align-items: center; gap: 2px; margin: 0 4px 0 -4px; color: #666; }
.tl { line-height: 16px; padding-right: 4px; }
.tl.sel { background: #d9d9d9; margin-left: -4px; padding-left: 4px; }
.treerow .thumb { margin-top: 10px; height: 107px; flex: none; }
.treebox .vs { padding-bottom: 7px; }
.treebox .hs { padding-right: 22px; }
.treebox .hs .thumb { width: 123px; margin-left: 5px; }
.treebox .hs .end { margin: 0 0 0 auto; }
.radios { flex: none; height: 38px; display: flex; align-items: center; gap: 21px; padding-left: 12px; }
.radios label { display: flex; align-items: center; gap: 8px; }
.radios input { appearance: none; width: 11px; height: 11px; margin: 0; border: 1px solid #888; border-radius: 50%; background: #fff; }
.radios input:checked { background: radial-gradient(#000 0 2px, #fff 3px); }
.rightcol { flex: 1; min-width: 0; display: flex; border: 1px solid #a0a0a0; border-width: 1px 1px 1px 2px; background: #fff; padding: 1px 2px 1px 0; }
.clip2 { flex: 1; min-width: 0; overflow: hidden; margin-right: 5px; }
.rightcol .thumb { margin-top: 7px; height: 17px; }
.actions { flex: none; height: 42px; display: flex; justify-content: flex-end; align-items: center; gap: 11px; padding: 1px 11px 0 0; border-top: 1px solid #fff; }
.actions button { width: 73px; height: 23px; background: #e1e1e1; border: 1px solid #adadad; }
.actions .pri { border: 2px solid #0078d7; }
</style>
